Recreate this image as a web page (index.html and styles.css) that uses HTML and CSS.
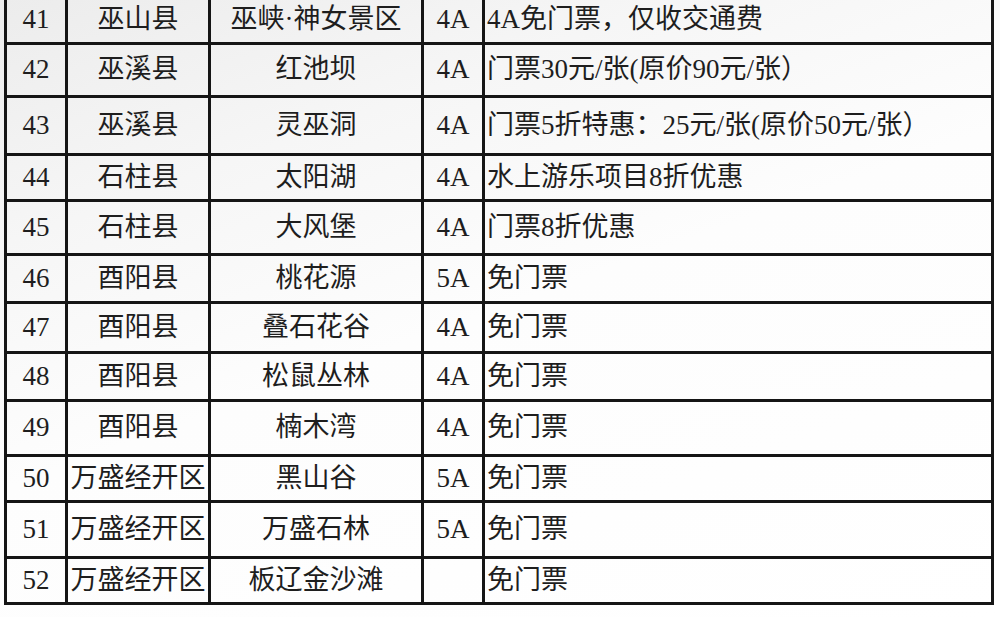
FILE: index.html
```html
<!DOCTYPE html>
<html lang="zh-CN">
<head>
<meta charset="utf-8">
<title>景区优惠表</title>
<link rel="stylesheet" href="styles.css">
</head>
<body>
<table class="sheet">
  <colgroup>
    <col class="c-no"><col class="c-area"><col class="c-spot"><col class="c-lvl"><col class="c-note">
  </colgroup>
  <tbody>
    <tr class="h48"><td class="no">41</td><td>巫山县</td><td>巫峡·神女景区</td><td>4A</td><td class="note">4A免门票，仅收交通费</td></tr>
    <tr class="h53"><td class="no">42</td><td>巫溪县</td><td>红池坝</td><td>4A</td><td class="note">门票30元/张(原价90元/张）</td></tr>
    <tr class="h58"><td class="no">43</td><td>巫溪县</td><td>灵巫洞</td><td>4A</td><td class="note">门票5折特惠：25元/张(原价50元/张）</td></tr>
    <tr class="h46"><td class="no">44</td><td>石柱县</td><td>太阳湖</td><td>4A</td><td class="note">水上游乐项目8折优惠</td></tr>
    <tr class="h54"><td class="no">45</td><td>石柱县</td><td>大风堡</td><td>4A</td><td class="note">门票8折优惠</td></tr>
    <tr class="h48"><td class="no">46</td><td>酉阳县</td><td>桃花源</td><td>5A</td><td class="note">免门票</td></tr>
    <tr class="h50"><td class="no">47</td><td>酉阳县</td><td>叠石花谷</td><td>4A</td><td class="note">免门票</td></tr>
    <tr class="h48"><td class="no">48</td><td>酉阳县</td><td>松鼠丛林</td><td>4A</td><td class="note">免门票</td></tr>
    <tr class="h55"><td class="no">49</td><td>酉阳县</td><td>楠木湾</td><td>4A</td><td class="note">免门票</td></tr>
    <tr class="h46"><td class="no">50</td><td>万盛经开区</td><td>黑山谷</td><td>5A</td><td class="note">免门票</td></tr>
    <tr class="h56"><td class="no">51</td><td>万盛经开区</td><td>万盛石林</td><td>5A</td><td class="note">免门票</td></tr>
    <tr class="h46"><td class="no">52</td><td>万盛经开区</td><td>板辽金沙滩</td><td></td><td class="note">免门票</td></tr>
  </tbody>
</table>
</body>
</html>
```
FILE: styles.css
```css
html, body {
  margin: 0;
  padding: 0;
}
body {
  width: 1000px;
  height: 617px;
  overflow: hidden;
  background: linear-gradient(160deg, #ececec 0%, #f6f6f6 25%, #fdfdfd 50%, #ffffff 100%);
  font-family: "Liberation Serif", "Noto Sans CJK SC", serif;
  color: #1e1e1e;
}
.sheet {
  border-collapse: collapse;
  table-layout: fixed;
  width: 987px;
  margin: -6px 0 0 4px;
  font-size: 27px;
}
.c-no { width: 61px; }
.c-area { width: 143px; }
.c-spot { width: 213px; }
.c-lvl { width: 61px; }
.c-note { width: 509px; }
.sheet td {
  border: 3px solid #151515;
  padding: 0;
  text-align: center;
  vertical-align: middle;
  white-space: nowrap;
  overflow: hidden;
  line-height: 1.1;
}
.sheet td.note {
  text-align: left;
  padding-left: 2px;
}
.h46 { height: 46px; }
.h48 { height: 48px; }
.h50 { height: 50px; }
.h53 { height: 53px; }
.h54 { height: 54px; }
.h55 { height: 55px; }
.h56 { height: 56px; }
.h58 { height: 58px; }
```
